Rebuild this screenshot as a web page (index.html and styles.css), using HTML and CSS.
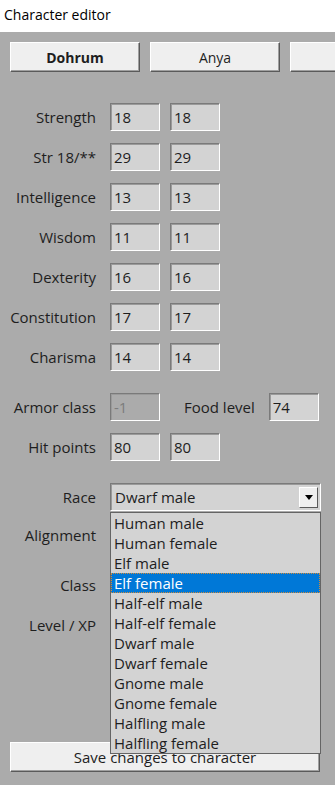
FILE: index.html
```html
<!DOCTYPE html>
<html lang="en">
<head>
    <meta charset="UTF-8">
    <title>Character editor</title>
    <link rel="stylesheet" href="styles.css">
</head>
<body>
    <div class="titlebar">Character editor</div>
    <div class="panel">
        <div class="tabs">
            <button class="btn tab bold">Dohrum</button>
            <button class="btn tab">Anya</button>
            <button class="btn tab"></button>
        </div>

        <div class="stats">
            <div class="row"><label>Strength</label><input class="box" value="18"><input class="box" value="18"></div>
            <div class="row"><label>Str 18/**</label><input class="box" value="29"><input class="box" value="29"></div>
            <div class="row"><label>Intelligence</label><input class="box" value="13"><input class="box" value="13"></div>
            <div class="row"><label>Wisdom</label><input class="box" value="11"><input class="box" value="11"></div>
            <div class="row"><label>Dexterity</label><input class="box" value="16"><input class="box" value="16"></div>
            <div class="row"><label>Constitution</label><input class="box" value="17"><input class="box" value="17"></div>
            <div class="row"><label>Charisma</label><input class="box" value="14"><input class="box" value="14"></div>
        </div>

        <div class="stats extra">
            <div class="row">
                <label>Armor class</label><input class="box" value="-1" disabled>
                <span class="food">Food level</span><input class="box" value="74">
            </div>
            <div class="row"><label>Hit points</label><input class="box" value="80"><input class="box" value="80"></div>
        </div>

        <div class="stats info">
            <div class="row">
                <label>Race</label>
                <div class="combo">
                    <span class="combo-text">Dwarf male</span>
                    <span class="combo-arrow"></span>
                    <ul class="list">
                        <li>Human male</li>
                        <li>Human female</li>
                        <li>Elf male</li>
                        <li class="selected">Elf female</li>
                        <li>Half-elf male</li>
                        <li>Half-elf female</li>
                        <li>Dwarf male</li>
                        <li>Dwarf female</li>
                        <li>Gnome male</li>
                        <li>Gnome female</li>
                        <li>Halfling male</li>
                        <li>Halfling female</li>
                    </ul>
                </div>
            </div>
            <div class="row align"><label>Alignment</label></div>
            <div class="row cls"><label>Class</label></div>
            <div class="row"><label>Level / XP</label></div>
        </div>

        <button class="btn save">Save changes to character</button>
    </div>
</body>
</html>
```

FILE: styles.css
```css
body {
    margin: 0;
    font-family: "Open Sans", "Noto Sans", sans-serif;
    font-size: 15px;
    color: #1e1e1e;
    background: #ababab;
    overflow: hidden;
}
.titlebar {
    background: #fff;
    height: 32px;
    line-height: 30px;
    padding-left: 4px;
    font-size: 14px;
    color: #000;
}
.panel {
    background: #ababab;
    height: 753px;
    box-sizing: border-box;
    padding: 10px 0 0 10px;
    position: relative;
}
.tabs {
    display: flex;
    gap: 10px;
    height: 30px;
    overflow: hidden;
    white-space: nowrap;
}
.btn {
    font-family: inherit;
    font-size: 14px;
    color: #1e1e1e;
    background: #efefef;
    border: 1px solid;
    border-color: #fff #5a5a5a #5a5a5a #fff;
    box-shadow: inset -1px -1px #a0a0a0;
    padding: 0;
    margin: 0;
}
.tab {
    flex: 0 0 130px;
    height: 30px;
}
.bold {
    font-weight: bold;
}
.stats {
    display: flex;
    flex-direction: column;
    gap: 12px;
    margin: 31px 0 0 -10px;
}
.row {
    display: flex;
    align-items: center;
    height: 28px;
}
.row label {
    width: 96px;
    text-align: right;
    margin-right: 14px;
    flex: none;
}
.box {
    width: 50px;
    height: 28px;
    box-sizing: border-box;
    margin: 0 10px 0 0;
    padding: 0 3px;
    font-family: inherit;
    font-size: 15px;
    color: #1e1e1e;
    background: #d3d3d3;
    border: 1px solid;
    border-color: #7a7a7a #fff #fff #7a7a7a;
    box-shadow: inset 1px 1px #9a9a9a;
    outline: none;
}
.box:disabled {
    background: #ababab;
    color: #7c7c7c;
}
.extra,
.info {
    margin-top: 22px;
}
.food {
    margin: 0 14px;
}
.align {
    margin-top: -2px;
}
.cls {
    margin-top: 10px;
}
.combo {
    position: relative;
    width: 211px;
    height: 28px;
    box-sizing: border-box;
    background: #d3d3d3;
    border: 1px solid;
    border-color: #7a7a7a #fff #fff #7a7a7a;
    box-shadow: inset 1px 1px #9a9a9a;
    display: flex;
    align-items: center;
}
.combo-text {
    flex: 1;
    padding-left: 4px;
}
.combo-arrow {
    width: 19px;
    height: 21px;
    margin-right: 2px;
    box-sizing: border-box;
    background: #efefef;
    border: 1px solid;
    border-color: #fff #5a5a5a #5a5a5a #fff;
    position: relative;
}
.combo-arrow::after {
    content: "";
    position: absolute;
    left: 5px;
    top: 7px;
    border: 4px solid transparent;
    border-top: 5px solid #000;
}
.list {
    position: absolute;
    left: -1px;
    top: 28px;
    width: 211px;
    box-sizing: border-box;
    margin: 0;
    padding: 0;
    list-style: none;
    background: #d3d3d3;
    border: 1px solid #646464;
    z-index: 5;
}
.list li {
    height: 20px;
    line-height: 20px;
    padding-left: 3px;
}
.list .selected {
    background: #0078d7;
    color: #fff;
    outline: 1px dotted #d08a3a;
    outline-offset: -1px;
}
.save {
    display: block;
    width: 310px;
    height: 30px;
    margin-top: 103px;
    font-size: 15px;
}
```
